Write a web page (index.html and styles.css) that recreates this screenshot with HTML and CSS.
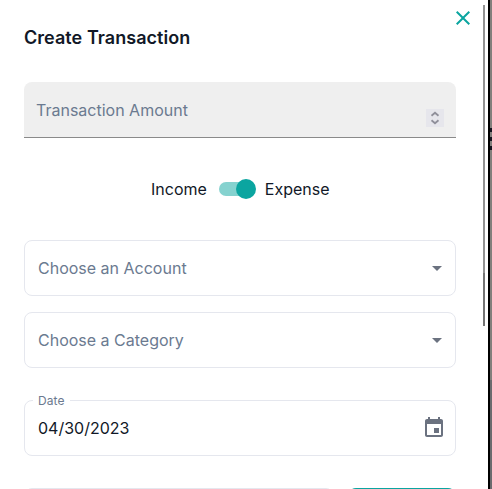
FILE: index.html
```html
<!DOCTYPE html>
<html lang="en">
<head>
<meta charset="utf-8">
<title>Create Transaction</title>
<link rel="stylesheet" href="styles.css">
</head>
<body>
<main class="dialog">
  <h1 class="title">Create Transaction</h1>
  <button class="close" aria-label="Close">
    <svg viewBox="0 0 24 24"><path d="M19 6.41 17.59 5 12 10.59 6.41 5 5 6.41 10.59 12 5 17.59 6.41 19 12 13.41 17.59 19 19 17.59 13.41 12z"/></svg>
  </button>
  <form class="form">
    <div class="amount">
      <span class="placeholder">Transaction Amount</span>
      <span class="spinner">
        <svg viewBox="0 0 18 18"><path d="M5.5 6.8 9 3.8l3.5 3M5.5 11.2l3.5 3 3.5-3"/></svg>
      </span>
    </div>
    <div class="kind">
      <span>Income</span>
      <span class="switch"><span class="thumb"></span></span>
      <span>Expense</span>
    </div>
    <div class="field account">
      <span class="placeholder">Choose an Account</span>
      <svg class="arrow" viewBox="0 0 24 24"><path d="m7 10 5 5 5-5z"/></svg>
    </div>
    <div class="field category">
      <span class="placeholder">Choose a Category</span>
      <svg class="arrow" viewBox="0 0 24 24"><path d="m7 10 5 5 5-5z"/></svg>
    </div>
    <div class="field date">
      <span class="label">Date</span>
      <span class="value">04/30/2023</span>
      <svg class="calendar" viewBox="0 0 24 24"><path d="M17 12h-5v5h5v-5zM16 1v2H8V1H6v2H5c-1.110 0-1.990.9-1.990 2L3 19c0 1.100.89 2 2 2h14c1.100 0 2-.9 2-2V5c0-1.100-.9-2-2-2h-1V1h-2zm3 18H5V8h14v11z"/></svg>
    </div>
    <div class="actions">
      <div class="note"></div>
      <div class="submit"></div>
    </div>
  </form>
  <div class="scrollbar"></div>
</main>
<aside class="backdrop"><i></i><i></i><i></i></aside>
</body>
</html>
```
FILE: styles.css
```css
* { box-sizing: border-box; }

body {
  margin: 0;
  height: 489px;
  display: flex;
  overflow: hidden;
  background: #fff;
  color: #111827;
  font: 400 16px/24px Inter, sans-serif;
}

.dialog {
  position: relative;
  width: 490px;
  height: 489px;
  flex: none;
  overflow: hidden;
  padding: 24px 32px 0 24px;
  border-right: 2px solid #000;
}

.title {
  margin: 0;
  font-size: 18px;
  font-weight: 600;
  line-height: 27px;
  letter-spacing: 0.05px;
}

.close {
  position: absolute;
  top: 6px;
  left: 451px;
  width: 24px;
  height: 24px;
  padding: 0;
  border: 0;
  background: none;
}

.close svg {
  display: block;
  fill: #0ba5a0;
}

.form {
  display: flex;
  flex-direction: column;
  margin-top: 31px;
}

.amount {
  display: flex;
  align-items: center;
  justify-content: space-between;
  height: 56px;
  padding: 0 12px;
  border-bottom: 1px solid #8a8a8a;
  border-radius: 8px 8px 0 0;
  background: #efefef;
}

.placeholder { color: #6b7a90; }

.spinner {
  width: 18px;
  height: 18px;
  margin-top: 16px;
  background: #e6e6ec;
}

.spinner svg {
  display: block;
  fill: none;
  stroke: #8f8f9a;
  stroke-width: 1.8;
}

.kind {
  display: flex;
  align-items: center;
  height: 24px;
  margin: 39px 0 39px 127px;
}

.switch {
  display: flex;
  justify-content: flex-end;
  align-items: center;
  width: 37px;
  height: 14px;
  margin: 0 9px 0 12px;
  border-radius: 7px;
  background: linear-gradient(90deg, #85d2cf 34px, transparent 34px);
}

.thumb {
  flex: none;
  width: 20px;
  height: 20px;
  border-radius: 50%;
  background: #0ba5a0;
}

.field {
  position: relative;
  display: flex;
  align-items: center;
  justify-content: space-between;
  height: 56px;
  padding: 0 6px 0 13px;
  border: 1px solid #e5e7ee;
  border-radius: 8px;
}

.category { margin-top: 16px; }
.date { margin-top: 32px; padding-right: 9px; }

.arrow,
.calendar {
  width: 24px;
  height: 24px;
  fill: #6b7280;
}

.label {
  position: absolute;
  top: -9px;
  left: 8px;
  padding: 0 5px;
  background: #fff;
  color: #6b7a90;
  font-size: 12px;
  line-height: 18px;
  letter-spacing: 0.1px;
}

.actions {
  display: flex;
  gap: 14px;
  margin-top: 32px;
}

.note {
  width: 310px;
  height: 56px;
  border: 1px solid #e5e7ee;
  border-radius: 8px;
}

.submit {
  width: 108px;
  height: 56px;
  border-radius: 8px;
  background: #0ba5a0;
}

.scrollbar {
  position: absolute;
  top: 5px;
  left: 483px;
  width: 2px;
  height: 321px;
  background: linear-gradient(#929292 268px, #747474 268px);
}

.backdrop {
  display: flex;
  flex-direction: column;
  gap: 5px;
  width: 2px;
  height: 489px;
  padding-top: 128px;
  background: linear-gradient(#827f7c 380px, #6b6b6e 380px);
}

.backdrop i {
  height: 4px;
  background: #14141f;
}
```
